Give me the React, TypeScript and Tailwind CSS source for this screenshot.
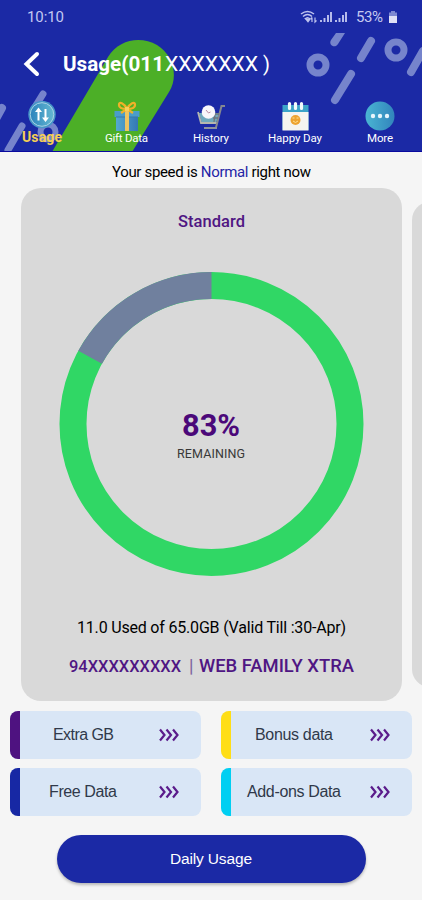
import type { ReactNode } from "react";

type LabelProps = { children: ReactNode; width: number; className?: string };

function Label({ children, width, className = "" }: LabelProps) {
  return (
    <svg width={width} height="24" className={"overflow-visible " + className}>
      <text x="0" y="17" textLength={width} fill="currentColor">{children}</text>
    </svg>
  );
}

function UsageIcon() {
  return (
    <svg width="30" height="30" viewBox="0 0 30 30">
      <defs><linearGradient id="u"><stop stopColor="#2c83bd" /><stop offset="1" stopColor="#65b8d0" /></linearGradient></defs>
      <circle cx="15" cy="13.5" r="13.7" fill="#4796c8" />
      <circle cx="15" cy="13.5" r="11.8" fill="url(#u)" stroke="#a9d3e3" strokeWidth="1" />
      <path d="M11.5 19.5V9M18.5 8v10.500" fill="none" stroke="white" strokeWidth="2" />
      <path d="m8 11 3.500-4.500L15 11zM15 16.500l3.500 4.500 3.500-4.500z" fill="white" />
    </svg>
  );
}

function GiftIcon() {
  return (
    <svg width="30" height="30" viewBox="0 0 30 30">
      <defs><linearGradient id="g"><stop stopColor="#54a9cf" /><stop offset="1" stopColor="#3478b4" /></linearGradient></defs>
      <path d="M4 15h22v15H4z" fill="url(#g)" />
      <path d="M2.500 10h25v6h-25z" fill="#4a9dca" />
      <path d="M4 16h22" stroke="#3679ad" strokeWidth="1" />
      <path d="M13 10h4v20h-4z" fill="#ecc462" />
      <path d="M15 8C12 2 7 0 7 4c0 3 4 4 8 4 4 0 8-1 8-4 0-4-5-2-8 4Zm0 0-6 4m6-4 6 4" fill="none" stroke="#efb128" strokeWidth="2.300" />
      <path d="M13 6h4v4h-4z" fill="#f5cf5c" />
    </svg>
  );
}

function HistoryIcon() {
  return (
    <svg width="32" height="30" viewBox="0 0 32 30">
      <path d="m4 12 2.500 9h15L24 12z" fill="#6fa9bd" />
      <path d="m3 11 3 11h16" fill="none" stroke="#b5b7ae" strokeWidth="1.800" />
      <path d="M30 5h-3.500L21 26.500" fill="none" stroke="#858890" strokeWidth="2" />
      <path d="M18 13h6M18 17h5M20 13l-1 8" stroke="#71757d" strokeWidth="1.300" />
      <circle cx="13.500" cy="11" r="6.800" fill="#f8f7fb" />
      <path d="m11 9 2.500 3 2-1" fill="none" stroke="#b98da5" strokeWidth="1" />
      <path d="M9 27h13" stroke="#8d929f" strokeWidth="2" />
    </svg>
  );
}

function CalendarIcon() {
  return (
    <svg width="30" height="30" viewBox="0 0 30 30">
      <path d="M2.500 4h26v25h-26z" fill="#3ca3c8" />
      <path d="M2.500 11h26v18.500h-26z" fill="#f5f4f0" />
      <path d="M9.500 2.500v5m6-5v5m6-5v5" stroke="#f2fafb" strokeWidth="3.200" strokeLinecap="round" />
      <circle cx="15.500" cy="19" r="5" fill="#eda331" />
      <path d="M12.500 17h2m2 0h2M13 20q2.500 3 5 0" fill="none" stroke="#ffe193" strokeWidth="1" />
    </svg>
  );
}

function MoreIcon() {
  return (
    <svg width="30" height="30" viewBox="0 0 30 30">
      <defs><linearGradient id="m"><stop stopColor="#4ab5d3" /><stop offset="1" stopColor="#3284bc" /></linearGradient></defs>
      <circle cx="15" cy="15" r="14.500" fill="url(#m)" />
      {[8, 15, 22].map(x => <circle key={x} cx={x} cy="15" r="2.200" fill="#e8f5fc" />)}
    </svg>
  );
}

function HeaderArt() {
  return (
    <svg className="absolute inset-0 h-[152px] w-full" viewBox="0 0 422 152">
      <path d="M52 152 108 57c11-18 33-21 49-12 16 10 22 31 12 47l-37 60Z" fill="#4caf27" />
      <g stroke="#7684cc" strokeWidth="8" strokeLinecap="round" fill="none">
        <path d="m-4 119 6-11" /><path d="m8 150 14-24M35 107l8-13" strokeWidth="7" />
        <circle cx="48" cy="132" r="7.500" strokeWidth="6" />
        <circle cx="318" cy="65" r="8" strokeWidth="7" /><circle cx="396" cy="50" r="8" strokeWidth="7" />
        <path d="m335 100 16-26M361 58l10-17M411 72l12-21" />
      </g>
      <path d="m331 40 5-7h9l-7 11c-3 5-10 1-7-4Z" fill="#7684cc" />
    </svg>
  );
}

function StatusIcons() {
  return (
    <svg width="100" height="20" viewBox="0 0 100 20" fill="none" stroke="#bec3ef" strokeWidth="1.500">
      <path d="M1 7q6.500-5 13 0M3 9.500q4.500-4 9 0M5 12q2.500-2.500 5 0" />
      <path d="m6 12 2 2.500 1.500-2z" fill="#bec3ef" />
      <path d="M12 10.500V15m-1.500-3 1.500-1.500M15 10.500V15l1.500-1.500" strokeWidth="1.200" />
      <path d="M21 15v-2m3.500 2v-4m3.500 4V8m3 7V5M36 15v-2m3.500 2v-4m3.500 4V8m3 7V5" strokeWidth="1.900" />
      <text x="56" y="14.800" textLength="27" fill="#c5c9f0" stroke="none" className="font-['Roboto',sans-serif] text-[15px]">53%</text>
      <path d="M89 5.500h2V4h4v1.500h2V10h-8z" fill="#7e89d2" stroke="none" />
      <path d="M89 9h8v7h-8z" fill="#e0e1f6" stroke="none" />
    </svg>
  );
}

const tabs = [
  { label: "Usage", width: 40, Icon: UsageIcon },
  { label: "Gift Data", width: 43, Icon: GiftIcon },
  { label: "History", width: 36, Icon: HistoryIcon },
  { label: "Happy Day", width: 54, Icon: CalendarIcon },
  { label: "More", width: 26, Icon: MoreIcon },
];

function Chevrons() {
  return (
    <svg width="22" height="14" viewBox="0 0 22 14" fill="none" stroke="#5b1c8b" strokeWidth="2.200">
      <path d="m2 1.500 4.500 5.500L2 12.500M8.500 1.500 13 7l-4.500 5.500M15 1.500 19.500 7 15 12.500" />
    </svg>
  );
}

const packages = [
  { label: "Extra GB", width: 61, color: "bg-[#4e1280]" },
  { label: "Bonus data", width: 78, color: "bg-[#ffde17]" },
  { label: "Free Data", width: 68, color: "bg-[#1728a4]" },
  { label: "Add-ons Data", width: 94, color: "bg-[#00cff2]" },
];

export default function App() {
  return (
    <main className="h-[900px] w-full overflow-hidden bg-[#f5f5f5] font-['Roboto',sans-serif] text-black">
      <header className="relative h-[152px] overflow-hidden border-b border-[#09099e] bg-[#1b29a5] text-white">
        <HeaderArt />
        <div className="relative flex h-[34px] items-center justify-between pl-[27px] pr-[22px] text-[#c3c9f2]">
          <Label width={37} className="text-[15px]">10:10</Label>
          <StatusIcons />
        </div>
        <div className="relative flex h-[60px] items-center pl-[23px]">
          <svg width="20" height="28" viewBox="0 0 20 28" fill="none" stroke="white" strokeWidth="4" strokeLinecap="round">
            <path d="m14 4-10.500 10L14 24" />
          </svg>
          <h1 className="ml-[20px] text-[21px]">
            <svg width="212" height="28" fill="white">
              <text x="0" y="21" className="font-bold" textLength="101" lengthAdjust="spacingAndGlyphs">Usage(011</text>
              <text x="102" y="21" textLength="93" lengthAdjust="spacingAndGlyphs">XXXXXXX</text>
              <text x="200" y="20.500" className="text-[20px]">)</text>
            </svg>
          </h1>
        </div>
        <nav className="relative grid h-[58px] grid-cols-5 pt-[7px]">
          {tabs.map(({ label, width, Icon }, index) => (
            <button key={label} className="flex flex-col items-center">
              <Icon />
              <Label width={width} className={index === 0 ? "-mt-[6px] text-[14px] font-bold text-[#f4ce55]" : "-mt-[6px] text-[11.500px]"}>{label}</Label>
            </button>
          ))}
        </nav>
      </header>
      <section className="flex h-[36px] items-center justify-center pt-[4px] text-[15px]">
        <svg width="199" height="22"><text x="0" y="16" textLength="199">Your speed is <tspan fill="#2424a6">Normal</tspan> right now</text></svg>
      </section>
      <section className="flex h-[513px] gap-[10px] overflow-hidden pl-[21px]">
        <article className="flex h-[513px] w-[381px] shrink-0 flex-col items-center rounded-[20px] bg-[#d9d9d9] text-[#4f1683]">
          <Label width={67} className="mt-[22px] text-[16.500px] font-medium">Standard</Label>
          <svg width="306" height="306" viewBox="0 0 306 306" className="mt-[37px]">
            <circle cx="152.500" cy="153" r="138.500" fill="none" stroke="#30d765" strokeWidth="27" />
            <circle cx="152.500" cy="153" r="138.500" fill="none" stroke="#70809e" strokeWidth="27" pathLength="100" strokeDasharray="17 83" strokeDashoffset="-83" transform="rotate(-90 152.500 153)" />
            <text x="123" y="165" textLength="58" fill="#4b0879" className="text-[32px] font-bold" lengthAdjust="spacingAndGlyphs">83%</text>
            <text x="118" y="187" textLength="68" fill="#383838" className="text-[12.500px]">REMAINING</text>
          </svg>
          <Label width={269} className="mt-[39px] text-[16px] text-black">11.0 Used of 65.0GB (Valid Till :30-Apr)</Label>
          <svg width="286" height="26" className="mt-[14px] text-[18px] font-medium" fill="#4f1683">
            <text x="0" y="18" textLength="112" lengthAdjust="spacingAndGlyphs" className="text-[17px]">94XXXXXXXXX</text>
            <text x="120" y="18" fill="#8066a0">|</text>
            <text x="130" y="18" textLength="155" lengthAdjust="spacingAndGlyphs">WEB FAMILY XTRA</text>
          </svg>
        </article>
        <aside className="mt-[14px] h-[485px] w-[40px] shrink-0 rounded-l-[18px] bg-[#d9d9d9]" />
      </section>
      <section className="mt-[10px] grid grid-cols-[191px_191px] gap-x-[20px] gap-y-[9px] px-[10px] font-['Liberation_Sans',sans-serif] text-[16px] text-[#30394a]">
        {packages.map(({ label, width, color }) => (
          <button key={label} className="flex h-[48px] overflow-hidden rounded-[8px] bg-[#d9e6f6]">
            <span className={"h-full w-[10px] shrink-0 " + color} />
            <span className="flex h-full w-[126px] items-center justify-center"><Label width={width}>{label}</Label></span>
            <span className="flex h-full items-center pl-[12px]"><Chevrons /></span>
          </button>
        ))}
      </section>
      <button className="mx-auto mt-[19px] flex h-[48px] w-[309px] items-center justify-center rounded-full bg-[#1b29a5] font-['Liberation_Sans',sans-serif] text-[15.500px] text-white shadow-[0_2px_3px_rgba(0,0,0,0.25)]"><Label width={82}>Daily Usage</Label></button>
    </main>
  );
}
